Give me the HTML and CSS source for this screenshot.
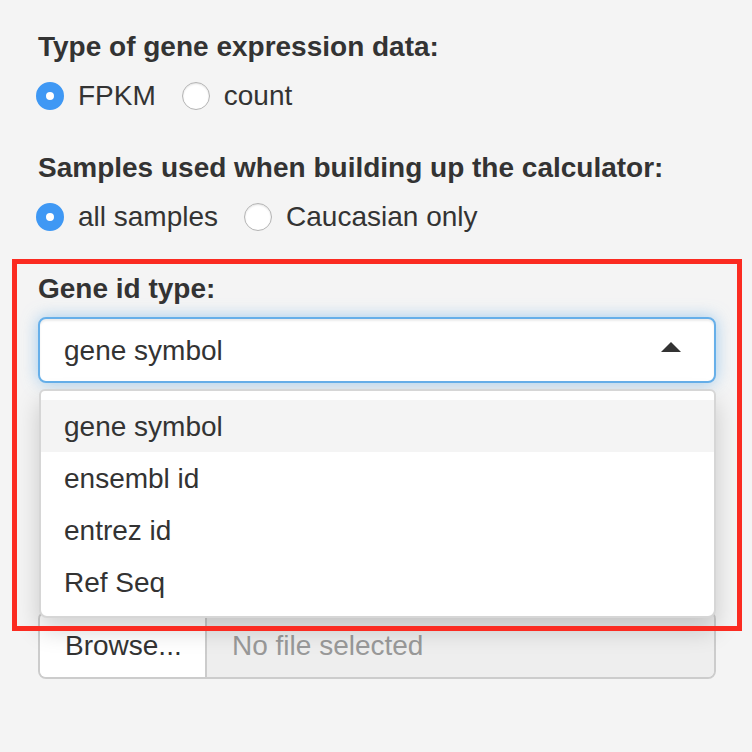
FILE: index.html
```html
<!DOCTYPE html>
<html lang="en">
<head>
<meta charset="utf-8">
<title>Gene expression calculator</title>
<link rel="stylesheet" href="styles.css">
</head>
<body>
<div class="panel">
  <div class="group">
    <div class="label">Type of gene expression data:</div>
    <div class="radios">
      <label class="radio"><span class="dot on"></span>FPKM</label>
      <label class="radio"><span class="dot"></span>count</label>
    </div>
  </div>
  <div class="group">
    <div class="label">Samples used when building up the calculator:</div>
    <div class="radios">
      <label class="radio"><span class="dot on"></span>all samples</label>
      <label class="radio"><span class="dot"></span>Caucasian only</label>
    </div>
  </div>
  <div class="group select-group">
    <div class="label">Gene id type:</div>
    <div class="select-wrap">
      <div class="select">
        <span class="value">gene symbol</span>
        <span class="caret"></span>
      </div>
      <div class="dropdown">
        <div class="option active">gene symbol</div>
        <div class="option">ensembl id</div>
        <div class="option">entrez id</div>
        <div class="option">Ref Seq</div>
      </div>
    </div>
  </div>
  <div class="file">
    <div class="browse">Browse...</div>
    <div class="filename">No file selected</div>
  </div>
  <div class="highlight"></div>
</div>
</body>
</html>
```
FILE: styles.css
```css
html, body {
  margin: 0;
  background: #f4f4f4;
}
body {
  font-family: "Liberation Sans", Arial, "Helvetica Neue", sans-serif;
  font-size: 28px;
  line-height: 40px;
  color: #333;
}
.panel {
  position: relative;
  box-sizing: border-box;
  height: 752px;
  padding: 27px 36px 0 38px;
}
.group {
  margin-bottom: 32px;
}
.label {
  font-weight: bold;
  margin-bottom: 9px;
}
.select-group .label {
  margin-bottom: 8px;
}
.radios {
  display: flex;
  gap: 26px;
  margin-left: -2px;
}
.radio {
  display: flex;
  align-items: center;
  gap: 14px;
}
.dot {
  width: 28px;
  height: 28px;
  box-sizing: border-box;
  border-radius: 50%;
  background: #fff;
  border: 1px solid #b4b4b4;
  box-shadow: inset 0 1px 2px rgba(0, 0, 0, 0.12);
}
.dot.on {
  border: 10px solid #3f98f4;
  background: #fff;
  box-shadow: none;
}
.select-group {
  margin-bottom: 0;
}
.select-wrap {
  position: relative;
  z-index: 2;
}
.select {
  display: flex;
  align-items: center;
  justify-content: space-between;
  box-sizing: border-box;
  height: 66px;
  padding: 11px 33px 11px 24px;
  background: #fff;
  border: 2px solid #66afe9;
  border-radius: 8px;
  box-shadow: inset 0 2px 2px rgba(0, 0, 0, 0.075), 0 0 16px rgba(102, 175, 233, 0.6);
}
.value {
  padding-top: 2px;
}
.caret {
  width: 0;
  height: 0;
  border-left: 10px solid transparent;
  border-right: 10px solid transparent;
  border-bottom: 10px solid #333;
  margin-bottom: 6px;
}
.dropdown {
  position: absolute;
  left: 1px;
  right: 0;
  top: calc(100% + 6px);
  background: #fff;
  border: 2px solid #d6d6d6;
  border-radius: 6px 6px 8px 8px;
  padding: 9px 0 8px;
  box-shadow: 0 12px 24px rgba(0, 0, 0, 0.175);
}
.option {
  padding: 7px 23px 5px;
}
.option.active {
  background: #f4f4f4;
}
.file {
  display: flex;
  margin-top: 228px;
  height: 68px;
  box-sizing: border-box;
  border: 2px solid #ccc;
  border-radius: 8px;
  overflow: hidden;
}
.browse {
  flex: 0 0 167px;
  box-sizing: border-box;
  padding: 13px 0 11px 25px;
  background: #fff;
  border-right: 2px solid #ccc;
}
.filename {
  flex: 1;
  padding: 13px 25px 11px;
  background: #eee;
  color: #999;
}
.highlight {
  position: absolute;
  left: 12px;
  top: 259px;
  width: 730px;
  height: 372px;
  box-sizing: border-box;
  border: 5px solid #fb2b21;
  z-index: 3;
  pointer-events: none;
}
```
